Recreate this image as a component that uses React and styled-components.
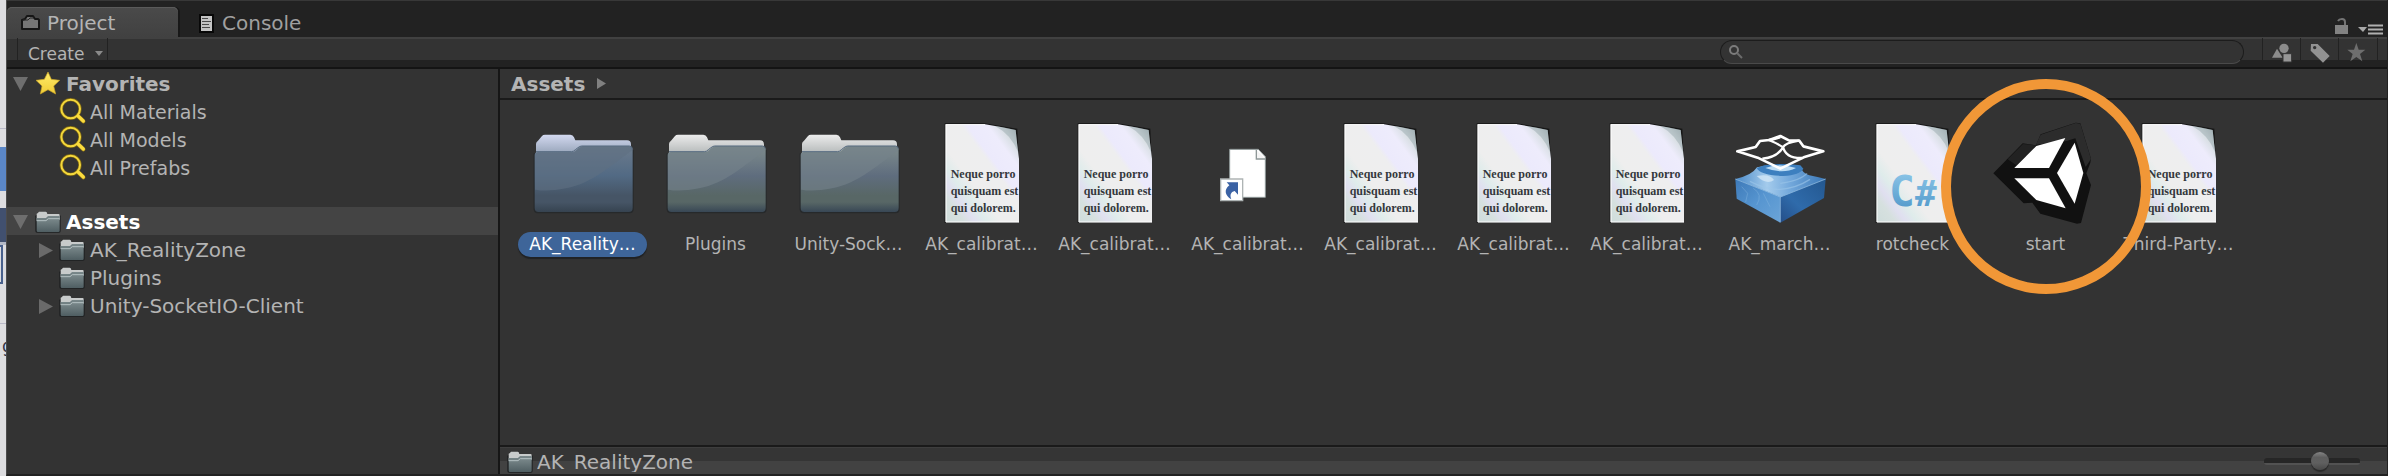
import React from "react";
import styled, { createGlobalStyle, css } from "styled-components";

const GlobalStyle = createGlobalStyle`
  *, *::before, *::after { box-sizing: border-box; }
  body { margin: 0; background: #333; }
  button, input { font: inherit; color: inherit; }
  svg { display: block; flex: none; overflow: visible; }
`;

const Screen = styled.div`
  display: flex;
  min-height: 100vh;
  background: #333;
  color: #b4b4b4;
  font-family: "DejaVu Sans", Verdana, sans-serif;
  font-size: 20px;
  overflow: hidden;
`;

/* sliver of the window that lies behind the editor */
const Backdrop = styled.div`
  flex: 0 0 6px;
  display: flex;
  flex-direction: column;
  overflow: hidden;
  background: #dddde0;
`;
const Strip = styled.div`
  flex: none;
  height: ${(p) => p.$h}px;
  background: ${(p) => p.$bg || "transparent"};
  border-top: ${(p) => (p.$line ? "1px solid #b9b9c8" : "0")};
`;
const BoxStrip = styled(Strip)`
  border: 2px solid #48608c;
  border-left: 0;
  width: 3px;
`;
const Letter = styled.span`
  display: block;
  padding-left: 2px;
  font-size: 17px;
  line-height: 20px;
  color: #33384a;
`;

const Panel = styled.main`
  flex: 1;
  min-width: 0;
  display: flex;
  flex-direction: column;
  border-left: 1px solid #4c4c4c;
  border-right: 1px solid #222;
  border-bottom: 2px solid #222;
`;

const TabBar = styled.header`
  display: flex;
  align-items: flex-end;
  gap: 8px;
  height: 37px;
  background: #222;
  border-top: 1px solid #383838;
`;
const Tab = styled.button`
  display: flex;
  align-items: center;
  gap: ${(p) => (p.$active ? 6 : 8)}px;
  height: 30px;
  padding: 2px 0 0 13px;
  width: ${(p) => (p.$active ? 171 : 158)}px;
  border: 0;
  border-radius: 5px 5px 0 0;
  background: ${(p) => (p.$active ? "linear-gradient(#4a4a4a, #414141)" : "transparent")};
  box-shadow: ${(p) => (p.$active ? "inset 0 1px #5a5a5a, 2px 0 #181818" : "none")};
  color: ${(p) => (p.$active ? "#b4b4b4" : "#a0a0a0")};
  text-align: left;
`;
const WindowTools = styled.div`
  display: flex;
  align-items: flex-end;
  gap: 10px;
  margin-left: auto;
  padding: 0 4px 3px 0;
`;
const BareButton = styled.button`
  display: block;
  padding: 0;
  border: 0;
  background: none;
`;

const Toolbar = styled.div`
  display: flex;
  align-items: center;
  height: 32px;
  padding: 0 9px 0 10px;
  border-bottom: 2px solid #141414;
  background: linear-gradient(#414141 0 2px, #333 2px 23px, #222 23px);
`;
const CreateButton = styled.button`
  display: flex;
  align-items: center;
  gap: 10px;
  height: 29px;
  padding: 3px 4px 0 10px;
  border: solid #222;
  border-width: 0 1px;
  background: none;
  font-size: 17px;
`;
const SearchField = styled.label`
  flex: 0 1 524px;
  display: flex;
  align-items: center;
  height: 24px;
  margin: 0 18px 0 auto;
  padding-left: 8px;
  border: 1px solid #1c1c1c;
  border-bottom-color: #4a4a4a;
  border-radius: 12px;
  background: #333;
  input {
    flex: 1;
    min-width: 0;
    border: 0;
    outline: 0;
    background: none;
    font-size: 17px;
    height: 20px;
  }
`;
const FilterButton = styled.button`
  display: flex;
  align-items: center;
  justify-content: center;
  width: ${(p) => (p.$last ? 40 : 38)}px;
  height: 28px;
  padding: ${(p) => (p.$last ? "0 4px 0 0" : "2px 0 0")};
  border: solid #222;
  border-width: 0 ${(p) => (p.$last ? "1px" : "0")} 0 1px;
  background: none;
`;

const Body = styled.div`
  flex: 1;
  display: flex;
  min-height: 0;
`;
const Sidebar = styled.nav`
  flex: 0 0 493px;
  border-right: 2px solid #161616;
`;
const Section = styled.section`
  margin-bottom: 26px;
  font-size: ${(p) => p.$size}px;
`;
const Row = styled.button`
  display: flex;
  align-items: center;
  width: 100%;
  height: 28px;
  padding: 2px 0 0 ${(p) => (p.$child ? 32 : 6)}px;
  border: 0;
  background: ${(p) => (p.$selected ? "#444" : "none")};
  text-align: left;
  white-space: nowrap;
  ${(p) =>
    !p.$child &&
    css`
      font-size: 20px;
      font-weight: bold;
    `}
  ${(p) => p.$selected && "color: #fff;"}
`;
const ArrowSlot = styled.span`
  flex: none;
  width: ${(p) => (p.$child ? 21 : 23)}px;
`;
const RowText = styled.span`
  margin-left: 6px;
`;

const Browser = styled.div`
  flex: 1;
  min-width: 0;
  display: flex;
  flex-direction: column;
`;
const Breadcrumb = styled.div`
  display: flex;
  align-items: center;
  gap: 12px;
  height: 31px;
  padding-left: 11px;
  border-bottom: 2px solid #1a1a1a;
  a {
    color: inherit;
    font-weight: bold;
    text-decoration: none;
  }
`;
const Grid = styled.div`
  flex: 1;
  display: grid;
  grid-template-columns: repeat(auto-fill, 133px);
  align-content: start;
  padding: 24px 0 0 16px;
`;
const Item = styled.div`
  position: relative;
  display: flex;
  flex-direction: column;
  align-items: center;
  gap: 8px;
`;
const ItemLabel = styled.button`
  height: 25px;
  padding: 0 11px;
  border: 0;
  border-radius: 13px;
  background: ${(p) => (p.$selected ? "#3e6599" : "none")};
  box-shadow: ${(p) => (p.$selected ? "0 2px 1px #202224" : "none")};
  color: ${(p) => (p.$selected ? "#fff" : "inherit")};
  font-size: 17px;
  line-height: 25px;
  white-space: nowrap;
`;
const Ring = styled.div`
  position: absolute;
  z-index: 2;
  top: -45px;
  left: 50%;
  width: 210px;
  height: 215px;
  transform: translateX(-50%);
  border: 10px solid #f19737;
  border-radius: 50%;
  pointer-events: none;
`;

const StatusBar = styled.footer`
  display: flex;
  align-items: flex-start;
  height: 29px;
  padding: 0 27px 0 8px;
  border-top: 2px solid #1a1a1a;
  background: linear-gradient(#3e3e3e 0 1px, #353535 1px 14px, #424242 14px);
`;
const StatusIcon = styled.span`
  padding-top: 3px;
`;
const StatusText = styled.span`
  height: 25px;
  margin-left: 5px;
  line-height: 30px;
  overflow: hidden;
`;
const ZoomSlider = styled.input`
  appearance: none;
  width: 96px;
  height: 20px;
  margin: 4px 0 0 auto;
  background: none;
  &::-webkit-slider-runnable-track {
    height: 7px;
    border-radius: 3px;
    background: linear-gradient(#262626 0 5px, #525252 5px);
  }
  &::-webkit-slider-thumb {
    appearance: none;
    width: 18px;
    height: 18px;
    margin-top: -6px;
    border-radius: 50%;
    background: linear-gradient(#858585, #5e5e5e 30%, #606060 60%, #484848);
    box-shadow: 0 2px 1px #2a2a2a;
  }
`;

/* ---------- small icons ---------- */
const Down = () => (
  <svg width="15" height="14" viewBox="0 0 15 14"><path d="M0 0h15L7.500 14z" fill="#6e6e6e" /></svg>
);
const Right = () => (
  <svg width="14" height="15" viewBox="0 0 14 15"><path d="M0 0v15L14 7.500z" fill="#6a6a6a" /></svg>
);
const SmallFolder = () => (
  <svg width="24" height="24" viewBox="105 60 72 72" aria-hidden="true">
    <defs>
      <linearGradient id="sf" x1="0" y1="0" x2="0" y2="1">
        <stop offset="0" stopColor="#839193" />
        <stop offset="1" stopColor="#4f5e62" />
      </linearGradient>
    </defs>
    <rect x="103" y="74" width="76" height="54" rx="5" fill="#1d1f20" />
    <path d="M107 92V72q0-2 3-2l4-5h20q4 0 5 7h34q3 0 3 4v14z" fill="#c8cbcb" />
    <path d="M107 84h28l6-6h35v44q0 4-4 4h-61q-4 0-4-4z" fill="url(#sf)" />
    <path d="M107 92h28l7-6h34" fill="none" stroke="#b4c0c2" strokeWidth="3" />
    <path d="M107 87h27l7-6h34" fill="none" stroke="#66757a" strokeWidth="2" />
  </svg>
);
const Star = () => (
  <svg width="24" height="24" viewBox="108 216 72 72" aria-hidden="true">
    <defs>
      <linearGradient id="st" x1="0" y1="0" x2="0" y2="1">
        <stop offset="0" stopColor="#ffec6a" />
        <stop offset="1" stopColor="#f0cc36" />
      </linearGradient>
    </defs>
    <path d="M144 216l10 22 25 3-18 17 6 24-23-13-23 13 5-24-18-17 25-3z" fill="url(#st)" stroke="#c9a325" strokeWidth="2" strokeLinejoin="round" />
  </svg>
);
const Lens = () => (
  <svg width="24" height="24" viewBox="180 300 72 72" aria-hidden="true">
    <g fill="none" strokeLinecap="round">
      <circle cx="212" cy="327" r="28" stroke="#7d6714" strokeWidth="10" />
      <path d="M233 347l17 17" stroke="#8a7014" strokeWidth="13" />
      <circle cx="212" cy="327" r="28" stroke="#f4d83c" strokeWidth="6" />
      <path d="M235 349l15 14" stroke="#fbdc3e" strokeWidth="10" />
    </g>
  </svg>
);
const TabFolder = () => (
  <svg width="21" height="18" viewBox="0 0 21 18" aria-hidden="true">
    <path d="M2 6l3-1 2-3h6l2 3h3l1 1v9H2z" fill="#767676" stroke="#161616" strokeWidth="2" strokeLinejoin="round" />
    <path d="M3 6h5l2-2h4" fill="none" stroke="#262626" />
  </svg>
);
const TabPage = () => (
  <svg width="15" height="19" viewBox="0 0 15 19" aria-hidden="true">
    <path d="M1 1h13v17H1z" fill="#c4c4c4" stroke="#080808" strokeWidth="2" />
    <path d="M3 4.500h6M3 7.500h9M3 10.500h7M3 13.500h8" stroke="#4a4a4a" />
  </svg>
);
const Lock = () => (
  <svg width="13" height="16" viewBox="0 0 13 16">
    <path d="M0 7h13v9H0z" fill="#828282" />
    <path d="M3 3q1-2 4-2t3 3v3" fill="none" stroke="#747474" strokeWidth="2" />
  </svg>
);
const Menu = () => (
  <svg width="25" height="16" viewBox="0 0 25 16">
    <path d="M0 9h9l-4 5z" fill="#a8a8a8" />
    <path d="M10 7.500h15M10 11.500h15M10 15.500h15" stroke="#b0b0b0" strokeWidth="2" />
  </svg>
);
const Shapes = () => (
  <svg width="20" height="20" viewBox="877 130 60 60">
    <path d="M877 174l15-27 17 27z" fill="#8c8c8c" />
    <circle cx="913" cy="146" r="14" fill="#8c8c8c" />
    <path d="M910 162h26v25h-26z" fill="#969696" stroke="#333" strokeWidth="3" />
  </svg>
);
const Tag = () => (
  <svg width="20" height="20" viewBox="990 130 60 60">
    <path fillRule="evenodd" d="M993 133h20l36 36-20 20-37-36zM1004 139a5 5 0 1 0 .1 0z" fill="#929292" />
  </svg>
);
const GreyStar = () => (
  <svg width="19" height="19" viewBox="1104 128 57 57">
    <path d="M1132 128l7 20h20l-16 13 7 22-18-13-18 13 7-22-16-13h20z" fill="#6e6e6e" />
  </svg>
);

/* ---------- asset thumbnails ---------- */
const Thumb = ({ x, y, children }) => (
  <svg width="100" height="100" viewBox={`${x} ${y} 300 300`} aria-hidden="true">{children}</svg>
);
const BigFolder = ({ selected }) => {
  const id = selected ? "a" : "b";
  const c = selected
    ? ["#d3d9f0", "#9ba8bd", "#6c7b8c", "#526a84", "#465566", "#364350", "#5f7082"]
    : ["#ececec", "#b8bcbc", "#7e8c8c", "#5f6d7e", "#586766", "#384755", "#75828a"];
  return (
    <Thumb x={528} y={222}>
      <defs>
        <linearGradient id={"tab" + id} x1="0" y1="0" x2="0" y2="1">
          <stop offset="0" stopColor={c[0]} />
          <stop offset="0.9" stopColor={c[1]} />
        </linearGradient>
        <linearGradient id={"bd" + id} x1="0" y1="0" x2="0" y2="1">
          <stop offset="0" stopColor={c[2]} />
          <stop offset="0.45" stopColor={c[3]} />
          <stop offset="0.75" stopColor={c[4]} />
          <stop offset="0.85" stopColor={c[4]} />
          <stop offset="1" stopColor={c[5]} />
        </linearGradient>
      </defs>
      <path d="M530 310v168q0 12 12 12h276q12 0 12-12V300z" fill="#26292b" />
      <path d="M537 312v-30q0-6 6-10l12-14q3-4 9-4h76q8 0 11 8l4 9h155q12 0 12 12v30z" fill={`url(#tab${id})`} />
      <path d="M533 316q0-10 10-10h102q7 0 12-6l8-7q5-5 12-5h138q12 0 12 12v173q0 13-12 13H545q-12 0-12-13z" fill={`url(#bd${id})`} />
      <path d="M534 318q0-10 10-10h102q7 0 12-6l8-7q5-5 12-5h138q10 0 11 10c-60 42-120 100-200 115-40 8-70 8-93 4z" fill={c[6]} opacity="0.6" />
      <path d="M537 305h106q7 0 12-6l8-6q5-5 12-5h142q8 0 9 8" fill="none" stroke="#55697f" strokeWidth="3" />
    </Thumb>
  );
};
const Page = ({ children }) => (
  <Thumb x={96} y={72}>
    <defs>
      <linearGradient id="pg" x1="0" y1="1" x2="1" y2="0">
        <stop offset="0" stopColor="#cfdcdb" />
        <stop offset="0.13" stopColor="#d6e0df" />
        <stop offset="0.2" stopColor="#e0dff0" />
        <stop offset="0.28" stopColor="#dfeceb" />
        <stop offset="0.38" stopColor="#eeeeee" />
        <stop offset="0.6" stopColor="#eeeeef" />
        <stop offset="0.64" stopColor="#eceafc" />
        <stop offset="0.78" stopColor="#eeecfc" />
        <stop offset="0.88" stopColor="#d5dde0" />
        <stop offset="1" stopColor="#a4b0b4" />
      </linearGradient>
    </defs>
    <path d="M134 70h120l98 16 4 90v193H134z" fill="#161616" />
    <path d="M137 73h118q50 8 92 17 4 40 10 86v191H137z" fill="url(#pg)" />
    <path d="M285 78q35 5 62 12 2 30 8 68-22-55-70-80z" fill="#7f9399" opacity="0.35" />
    <path d="M137 74h118M138 74v292h219" fill="none" stroke="#fff" strokeWidth="3" />
    {children}
  </Thumb>
);
const PageText = styled.text`
  font-family: "Liberation Serif", serif;
  font-size: 36px;
  font-weight: bold;
  fill: #34383c;
`;
const TextPage = () => (
  <Page>
    <PageText x="152" y="234">Neque porro</PageText>
    <PageText x="152" y="285">quisquam est</PageText>
    <PageText x="152" y="336">qui dolorem.</PageText>
  </Page>
);
const CodeText = styled.text`
  font-family: "DejaVu Sans Mono", monospace;
  font-size: 129px;
  font-weight: bold;
  fill: url(#cs);
`;
const CodeHash = styled.tspan`
  font-size: 108px;
`;
const CSharpPage = () => (
  <Page>
    <defs>
      <linearGradient id="cs" x1="0" y1="0" x2="0" y2="1">
        <stop offset="0" stopColor="#94ccec" />
        <stop offset="1" stopColor="#4a92c6" />
      </linearGradient>
    </defs>
    <CodeText x="174" y="318">C<CodeHash>#</CodeHash></CodeText>
  </Page>
);
const Shortcut = () => (
  <Thumb x={894} y={72}>
    <path d="M989 148h86l21 22v122H989z" fill="#fff" stroke="#8f9898" strokeWidth="3" />
    <path d="M1069 149v28h27" fill="#f4f4f4" stroke="#8f9898" strokeWidth="4" />
    <path d="M962 237h66v65h-66z" fill="#fff" stroke="#aeb4b4" strokeWidth="4" />
    <path d="M980 247h34v37l-10-11c-12 3-15 12-10 25-18-10-24-28-6-42z" fill="#3b62a4" />
  </Thumb>
);
const Mesh = () => (
  <Thumb x={90} y={192}>
    <defs>
      <linearGradient id="ml" x1="0" y1="0" x2="1" y2="1">
        <stop offset="0" stopColor="#3d79b8" />
        <stop offset="0.5" stopColor="#5695d0" />
        <stop offset="1" stopColor="#6ba4d8" />
      </linearGradient>
      <linearGradient id="mr" x1="1" y1="0" x2="0" y2="1">
        <stop offset="0" stopColor="#23578f" />
        <stop offset="0.6" stopColor="#2f6bab" />
        <stop offset="1" stopColor="#244e88" />
      </linearGradient>
      <linearGradient id="mt" x1="0" y1="0" x2="1" y2="0">
        <stop offset="0" stopColor="#4a8ac8" />
        <stop offset="0.35" stopColor="#a4cbec" />
        <stop offset="0.6" stopColor="#74a9dc" />
        <stop offset="1" stopColor="#3a78b8" />
      </linearGradient>
    </defs>
    <path d="M106 357l135 53v78L110 416z" fill="url(#ml)" />
    <path d="M377 357l-136 53v78l131-74z" fill="url(#mr)" />
    <path d="M106 357q50-11 65-35l22-4h108q4 20 27 28 25 5 49 11l-136 54z" fill="url(#mt)" />
    <path d="M170 324q10 22 80 24 50-3 60-22l-9-10q-60-8-108 0z" fill="#3d7fbf" />
    <path d="M196 324q40-16 92 0-40 20-92 0z" fill="#bcdcf4" />
    <path d="M170 348q40-8 52 12-22 16-52-12z" fill="#d2e6f6" opacity="0.8" />
    <path d="M241 370q60-8 80-30M150 364q50 26 90 24 50-4 90-30" fill="none" stroke="#9cc6ea" strokeWidth="4" opacity="0.6" />
    <path d="M106 357l135 54 136-54M241 411v76" fill="none" stroke="#8cbbe6" strokeWidth="3" opacity="0.8" />
    <path d="M125 380l18 20-6 26M160 385q30 18 10 50M190 400l20 40" fill="none" stroke="#8ab8e2" strokeWidth="3" opacity="0.4" />
    <g fill="none" stroke="#fff" strokeWidth="8" strokeLinejoin="round">
      <path d="M112 274l55-13 13-18 28-3 33-12 27 14h30l12 17 60 15-59 18-70 34-68-33z" />
      <path d="M241 231q-10 6-35 9 22 8 43 22 6-13 48-20M249 260q8 36 58 34M249 262q-18 30-62 34" strokeWidth="7" />
    </g>
  </Thumb>
);
const Scene = () => (
  <Thumb x={201} y={192}>
    <path d="M193 340l88-90 40 6 14-33 105-35 14 2 32 106-2 12-12 32 14 35-30 114-12 2-110-30-24-33-26 2z" fill="#111" />
    <path d="M321 254l14-30 105-35 14 2 32 106-16 24-31-86-26 8z" fill="#2c2c2c" />
    <path d="M236 298l46-46 40 4-60 60z" fill="#222" />
    <path d="M256 324l66-66 87-24-49 90z" fill="#fff" />
    <path d="M256 355h104l50 90-88-25z" fill="#fff" />
    <path d="M437 248l26 91-26 92-53-92z" fill="#fff" />
  </Thumb>
);

const ASSETS = [
  { label: "AK_Reality…", Icon: () => <BigFolder selected />, selected: true },
  { label: "Plugins", Icon: BigFolder },
  { label: "Unity-Sock…", Icon: BigFolder },
  { label: "AK_calibrat…", Icon: TextPage },
  { label: "AK_calibrat…", Icon: TextPage },
  { label: "AK_calibrat…", Icon: Shortcut },
  { label: "AK_calibrat…", Icon: TextPage },
  { label: "AK_calibrat…", Icon: TextPage },
  { label: "AK_calibrat…", Icon: TextPage },
  { label: "AK_march…", Icon: Mesh },
  { label: "rotcheck", Icon: CSharpPage },
  { label: "start", Icon: Scene, ringed: true },
  { label: "Third-Party…", Icon: TextPage },
];

function TreeRow({ label, icon, arrow, child, selected }) {
  return (
    <Row $child={child} $selected={selected}>
      <ArrowSlot $child={child}>{arrow}</ArrowSlot>
      {icon}
      <RowText>{label}</RowText>
    </Row>
  );
}

export default function App() {
  return (
    <Screen>
      <GlobalStyle />
      <Backdrop aria-hidden="true">
        <Strip $h={128} />
        <Strip $h={19} $line />
        <Strip $h={44} $bg="#5b87c7" />
        <Strip $h={17} />
        <Strip $h={34} $bg="#41506f" />
        <Strip $h={3} $bg="#b4b9c6" />
        <BoxStrip $h={39} />
        <Strip $h={39} />
        <Strip $h={13} $line />
        <Letter>g</Letter>
      </Backdrop>
      <Panel>
        <TabBar>
          <Tab $active><TabFolder />Project</Tab>
          <Tab><TabPage />Console</Tab>
          <WindowTools>
            <BareButton aria-label="Lock"><Lock /></BareButton>
            <BareButton aria-label="Menu"><Menu /></BareButton>
          </WindowTools>
        </TabBar>
        <Toolbar>
          <CreateButton>
            Create
            <svg width="8" height="5" viewBox="0 0 8 5"><path d="M0 0h8L4 5z" fill="#8a8a8a" /></svg>
          </CreateButton>
          <SearchField>
            <svg width="14" height="14" viewBox="0 0 14 14">
              <circle cx="5" cy="5" r="4" fill="none" stroke="#7c7c7c" strokeWidth="2" />
              <path d="M8 8l5 5" stroke="#6c6c6c" strokeWidth="2" />
            </svg>
            <input type="text" aria-label="Search assets" />
          </SearchField>
          <FilterButton aria-label="Search by type"><Shapes /></FilterButton>
          <FilterButton aria-label="Search by label"><Tag /></FilterButton>
          <FilterButton aria-label="Save search" $last><GreyStar /></FilterButton>
        </Toolbar>
        <Body>
          <Sidebar>
            <Section $size={19}>
              <TreeRow label="Favorites" icon={<Star />} arrow={<Down />} />
              <TreeRow child label="All Materials" icon={<Lens />} />
              <TreeRow child label="All Models" icon={<Lens />} />
              <TreeRow child label="All Prefabs" icon={<Lens />} />
            </Section>
            <Section $size={20}>
              <TreeRow label="Assets" icon={<SmallFolder />} arrow={<Down />} selected />
              <TreeRow child label="AK_RealityZone" icon={<SmallFolder />} arrow={<Right />} />
              <TreeRow child label="Plugins" icon={<SmallFolder />} />
              <TreeRow child label="Unity-SocketIO-Client" icon={<SmallFolder />} arrow={<Right />} />
            </Section>
          </Sidebar>
          <Browser>
            <Breadcrumb>
              <a href="#assets">Assets</a>
              <svg width="9" height="11" viewBox="0 0 9 11"><path d="M0 0v11l9-5.500z" fill="#808080" /></svg>
            </Breadcrumb>
            <Grid>
              {ASSETS.map(({ label, Icon, selected, ringed }, i) => (
                <Item key={i}>
                  <Icon />
                  <ItemLabel $selected={selected}>{label}</ItemLabel>
                  {ringed && <Ring />}
                </Item>
              ))}
            </Grid>
            <StatusBar>
              <StatusIcon><SmallFolder /></StatusIcon>
              <StatusText>AK_RealityZone</StatusText>
              <ZoomSlider type="range" min="0" max="100" defaultValue="60" aria-label="Thumbnail size" />
            </StatusBar>
          </Browser>
        </Body>
      </Panel>
    </Screen>
  );
}
